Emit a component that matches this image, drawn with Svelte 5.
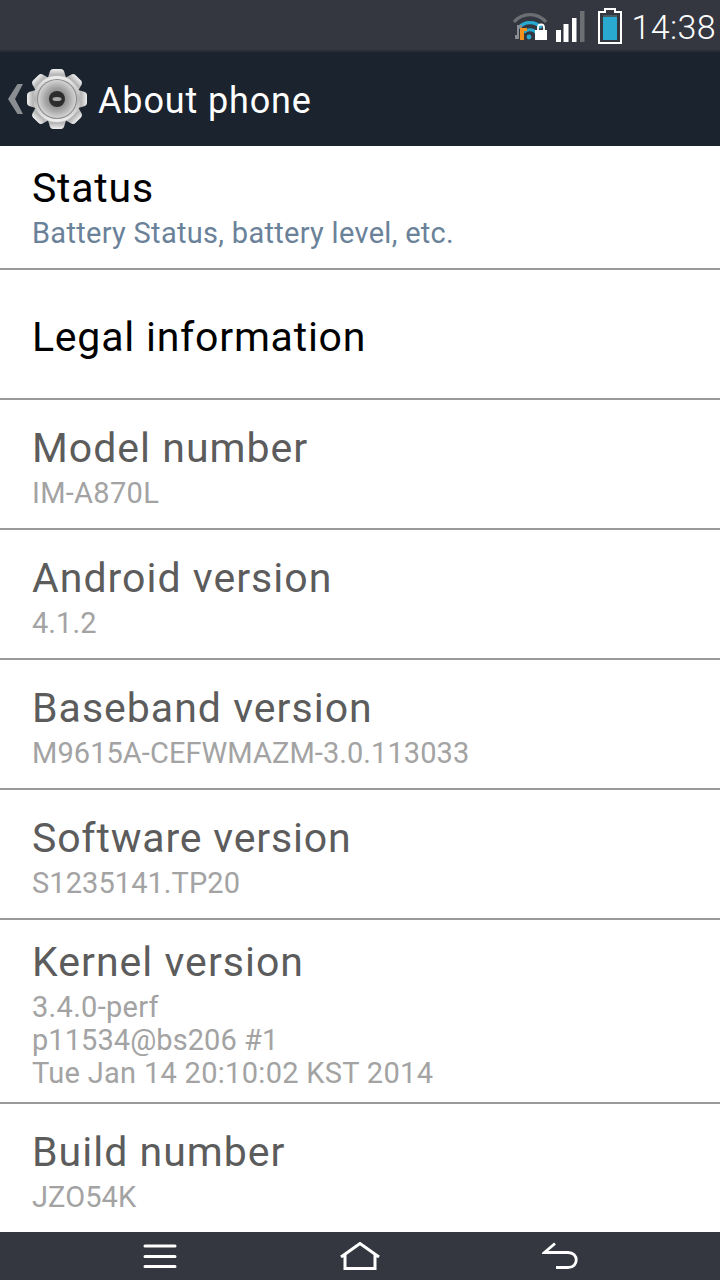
<script>
  const rows = [
    { title: 'Status', lines: [{ t: 'Battery Status, battery level, etc.' }], cls: 'status' },
    { title: 'Legal information', lines: [], cls: 'legal' },
    { title: 'Model number', lines: [{ t: 'IM-A870L' }], cls: 'info' },
    { title: 'Android version', lines: [{ t: '4.1.2', d: true }], cls: 'info' },
    { title: 'Baseband version', lines: [{ t: 'M9615A-CEFWMAZM-3.0.113033', d: true }], cls: 'info' },
    { title: 'Software version', lines: [{ t: 'S1235141.TP20', d: true }], cls: 'info software' },
    { title: 'Kernel version', lines: [{ t: '3.4.0-perf' }, { t: 'p11534@bs206 #1', d: true }, { t: 'Tue Jan 14 20:10:02 KST 2014' }], cls: 'info kernel' },
    { title: 'Build number', lines: [{ t: 'JZO54K', d: true }], cls: 'info last' }
  ];
  const teeth = [0, 45, 90, 135, 180, 225, 270, 315];
</script>

<div class="screen">
  <header class="statusbar">
    <svg class="wifi" viewBox="0 0 36 34" width="36" height="34" aria-hidden="true">
      <path d="M2 13 A21 21 0 0 1 34 13" fill="none" stroke="#6b6e72" stroke-width="3.4" />
      <path d="M6.500 19 A15 15 0 0 1 29.500 19" fill="none" stroke="#29a9d0" stroke-width="3.4" />
      <path d="M12 23.500 A8 8 0 0 1 24 23.500" fill="none" stroke="#29a9d0" stroke-width="3" />
      <circle cx="17" cy="28" r="2.400" fill="#29a9d0" />
      <path d="M3 30 h4 v-11 h3 v-3 h-5 v10 h-2z" fill="#8b8d90" />
      <rect x="8" y="19" width="4" height="12" fill="#f5921e" />
      <rect x="12" y="19" width="3" height="3" fill="#f5921e" />
      <rect x="23" y="21" width="12" height="10" fill="#fff" />
      <path d="M26 21 v-2.500 a3 3 0 0 1 6 0 v2.500" fill="none" stroke="#fff" stroke-width="1.800" />
    </svg>
    <svg class="signal" viewBox="0 0 29 32" width="29" height="32" aria-hidden="true">
      <rect x="0" y="19" width="5" height="12" fill="#fff" />
      <rect x="7.500" y="13" width="5" height="18" fill="#fff" />
      <rect x="16" y="7" width="4.500" height="24" fill="#fff" />
      <rect x="24" y="0" width="4.500" height="31" fill="#6d6f72" />
    </svg>
    <svg class="battery" viewBox="0 0 24 36" width="24" height="36" aria-hidden="true">
      <path d="M7 1 h10 v3 h6 v31 h-22 v-31 h6z" fill="none" stroke="#fff" stroke-width="2" />
      <rect x="5" y="9" width="14" height="23" fill="#29a9d0" />
      <rect x="5" y="7" width="14" height="2" fill="#4a5a60" />
    </svg>
    <span class="clock">14:38</span>
  </header>

  <div class="actionbar">
    <svg class="chevron" viewBox="0 0 15 30" width="15" height="30" aria-hidden="true">
      <path d="M15 0 L7 15 L15 30 H9.500 L0 15 L9.500 0z" fill="#8a8e92" />
    </svg>
    <svg class="gear" viewBox="0 0 64 64" width="64" height="64" aria-hidden="true">
      <defs>
        <linearGradient id="metal" x1="0" y1="0" x2="0" y2="1">
          <stop offset="0" stop-color="#f0f0f0" />
          <stop offset="0.5" stop-color="#b4b4b4" />
          <stop offset="1" stop-color="#f2f2f2" />
        </linearGradient>
        <radialGradient id="disc">
          <stop offset="0" stop-color="#6a6a6a" />
          <stop offset="0.6" stop-color="#a3a3a3" />
          <stop offset="1" stop-color="#d4d4d4" />
        </radialGradient>
      </defs>
      <g fill="url(#metal)">
        {#each teeth as a}
          <path d="M25 4 Q26 2 28 2 h8 Q38 2 39 4 l3 10 h-20z" transform="rotate({a} 32 32)" />
        {/each}
        <circle cx="32" cy="32" r="23" />
      </g>
      <circle cx="32" cy="32" r="20" fill="#8a8a8a" />
      <circle cx="32" cy="32" r="19" fill="url(#disc)" />
      <circle cx="32" cy="32" r="8" fill="#2c2c2c" />
      <ellipse cx="32" cy="32" rx="4.500" ry="2" fill="#a8a8a8" />
    </svg>
    <h1>About phone</h1>
  </div>

  <main class="list">
    {#each rows as row}
      <section class="row {row.cls}">
        <div class="title">{row.title}</div>
        {#each row.lines as line}
          <div class="sub" class:digits={line.d}>{line.t}</div>
        {/each}
      </section>
    {/each}
  </main>

  <nav class="navbar">
    <svg viewBox="0 0 34 24" width="34" height="24" aria-hidden="true">
      <path d="M2 2 H32 M2 12.500 H32 M2 22.500 H32" fill="none" stroke="#fff" stroke-width="3" stroke-linecap="round" />
    </svg>
    <svg viewBox="0 0 40 28" width="40" height="28" aria-hidden="true">
      <path d="M1 15 L20 1.500 L39 15 M5 12.500 V26.500 H35 V12.500" fill="none" stroke="#fff" stroke-width="3" />
    </svg>
    <svg viewBox="0 0 36 28" width="36" height="28" aria-hidden="true">
      <path d="M13 1.500 L2.500 10.500 H26 C37 10.500 37 25.500 26 25.500 H14" fill="none" stroke="#fff" stroke-width="2.800" />
    </svg>
  </nav>
</div>

<style>
  :global(body) {
    margin: 0;
    background: #fff;
  }
  .screen {
    width: 720px;
    height: 1280px;
    display: flex;
    flex-direction: column;
    overflow: hidden;
    font-family: Roboto, "Liberation Sans", sans-serif;
    background: #fff;
  }
  .statusbar {
    height: 50px;
    flex: none;
    box-sizing: border-box;
    background: #34373f;
    display: flex;
    align-items: center;
    justify-content: flex-end;
    padding-right: 4px;
  }
  .wifi { margin-right: 8px; margin-top: 2px; }
  .signal { margin-right: 13px; margin-top: 4px; }
  .battery { margin-right: 9px; margin-top: 1px; }
  .clock {
    color: #fff;
    font-size: 34px;
    font-weight: 300;
    letter-spacing: 0.4px;
    line-height: 50px;
    margin-top: 4px;
  }
  .actionbar {
    height: 96px;
    flex: none;
    background: #1b232e;
    border-top: 2px solid #2a2f37;
    box-sizing: border-box;
    display: flex;
    align-items: center;
    padding-left: 8px;
  }
  .gear { margin-left: 2px; margin-right: 9px; }
  h1 {
    margin: 4px 0 0;
    color: #fff;
    font-size: 36px;
    font-weight: 400;
    letter-spacing: 0.85px;
  }
  .list {
    flex: 1;
    min-height: 0;
    display: flex;
    flex-direction: column;
  }
  .row {
    box-sizing: border-box;
    height: 130px;
    padding: 23px 32px 0;
    border-bottom: 2px solid #9a9a9a;
    flex: none;
  }
  .title {
    font-size: 41px;
    line-height: 50px;
    letter-spacing: 0.77px;
    color: #000;
  }
  .info .title {
    color: #5c5c5c;
    letter-spacing: 1.02px;
  }
  .info.software .title { letter-spacing: 0.82px; }
  .sub {
    font-size: 29px;
    line-height: 33px;
    letter-spacing: 0.3px;
    margin-top: 4px;
    color: #a3a3a3;
  }
  .sub.digits { letter-spacing: 0.07px; }
  .sub + .sub { margin-top: 0; }
  .status { height: 124px; padding-top: 17px; }
  .status .sub { color: #6a8299; margin-top: 4px; }
  .legal { padding-top: 42px; }
  .kernel { height: 184px; padding-top: 17px; }
  .last { flex: 1; border-bottom: 0; padding-top: 23px; }
  .navbar {
    height: 48px;
    flex: none;
    box-sizing: border-box;
    padding: 0 60px;
    background: #34373f;
    display: grid;
    grid-template-columns: 1fr 1fr 1fr;
    align-items: center;
    justify-items: center;
  }
</style>
